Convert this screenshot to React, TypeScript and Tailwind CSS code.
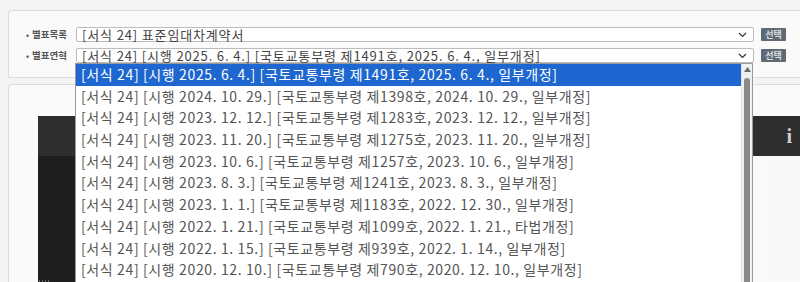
import React from "react";

const items = [
  "[서식 24] [시행 2025. 6. 4.] [국토교통부령 제1491호, 2025. 6. 4., 일부개정]",
  "[서식 24] [시행 2024. 10. 29.] [국토교통부령 제1398호, 2024. 10. 29., 일부개정]",
  "[서식 24] [시행 2023. 12. 12.] [국토교통부령 제1283호, 2023. 12. 12., 일부개정]",
  "[서식 24] [시행 2023. 11. 20.] [국토교통부령 제1275호, 2023. 11. 20., 일부개정]",
  "[서식 24] [시행 2023. 10. 6.] [국토교통부령 제1257호, 2023. 10. 6., 일부개정]",
  "[서식 24] [시행 2023. 8. 3.] [국토교통부령 제1241호, 2023. 8. 3., 일부개정]",
  "[서식 24] [시행 2023. 1. 1.] [국토교통부령 제1183호, 2022. 12. 30., 일부개정]",
  "[서식 24] [시행 2022. 1. 21.] [국토교통부령 제1099호, 2022. 1. 21., 타법개정]",
  "[서식 24] [시행 2022. 1. 15.] [국토교통부령 제939호, 2022. 1. 14., 일부개정]",
  "[서식 24] [시행 2020. 12. 10.] [국토교통부령 제790호, 2020. 12. 10., 일부개정]",
];

const Chevron = () => (
  <svg width="9" height="6" viewBox="0 0 9 6" className="shrink-0">
    <path d="M1 1l3.5 3.5L8 1" fill="none" stroke="#333" strokeWidth="1.2" />
  </svg>
);

function FieldRow({ label, value, children }: { label: string; value: string; children?: React.ReactNode }) {
  return (
    <div className="flex items-center h-[15px]">
      <div className="w-[67px] flex items-center pl-[17px] text-[9.5px] font-bold text-[#555]">
        <span className="mr-[3px] text-[8px]">•</span>
        {label}
      </div>
      <div className="relative">
        <div className="w-[678px] h-[15px] border border-[#bdbdbd] rounded-[2px] bg-white flex items-center pl-[5px] pr-[6px]">
          <span className="flex-1 text-[13px] leading-[13px] text-[#444] whitespace-nowrap tracking-[0.85px]">{value}</span>
          <Chevron />
        </div>
        {children}
      </div>
      <div className="ml-[7px] w-[25px] h-[13px] bg-[#5f6a74] rounded-[1px] text-[9px] leading-[13px] text-[#d8dde2] text-center font-bold">
        선택
      </div>
    </div>
  );
}

export default function App() {
  return (
    <div className="w-[800px] h-[282px] overflow-hidden bg-[#f3f3f3] relative font-['Noto_Sans_CJK_KR','Noto_Sans',sans-serif]">
      {/* search panel */}
      <div className="ml-[8px] mt-[10px] h-[68px] border border-r-0 border-[#dcdcdc] rounded-tl-[4px] bg-[#fafafa] pt-[16px] flex flex-col gap-[6px]">
        <FieldRow label="별표목록" value="[서식 24] 표준임대차계약서" />
        <FieldRow label="별표연혁" value={items[0]}>
          {/* open dropdown */}
          <div className="absolute left-[-1px] top-[15px] z-10 w-[678px] h-[230px] border border-[#9a9a9a] bg-white flex overflow-hidden">
            <div className="flex-1">
              {items.map((t, i) => (
                <div
                  key={t}
                  className={
                    "h-[21.7px] pl-[5px] text-[14px] leading-[21.7px] whitespace-nowrap tracking-[0.62px] " +
                    (i === 0 ? "bg-[#1e66d0] text-white" : "text-[#555]")
                  }
                >
                  {t}
                </div>
              ))}
            </div>
            <div className="w-[11px] bg-[#f0f0f0] border-l border-[#e2e2e2] flex flex-col items-center pt-[3px]">
              <svg width="7" height="5" viewBox="0 0 7 5">
                <path d="M3.5 0L7 5H0z" fill="#6a6a6a" />
              </svg>
              <div className="mt-[6px] w-[6px] flex-1 bg-[#8a8a8a] rounded-t-[3px]" />
            </div>
          </div>
        </FieldRow>
      </div>

      {/* viewer panel */}
      <div className="ml-[8px] mt-[6px] h-[210px] border border-r-0 border-[#dcdcdc] rounded-tl-[4px] bg-[#fafafa] pt-[31px] pl-[29px]">
        <div className="h-full flex flex-col">
          <div className="h-[40px] bg-[#2e2e2e] flex items-center justify-end pr-[8px]">
            <span className="text-[#cfcfcf] text-[20px] font-['Liberation_Serif',serif] font-bold">i</span>
          </div>
          <div className="flex-1 flex">
            <div className="w-[60px] bg-[#1f1f1f]">
              <div className="mt-[124px] h-[8px] w-[12px] ml-[1px] bg-[repeating-linear-gradient(90deg,#666_0_1px,#1f1f1f_1px_3px)]" />
            </div>
            <div className="flex-1 bg-gradient-to-r from-[#ececec] via-[#f9f9f9] to-[#f9f9f9]" />
          </div>
        </div>
      </div>
    </div>
  );
}
